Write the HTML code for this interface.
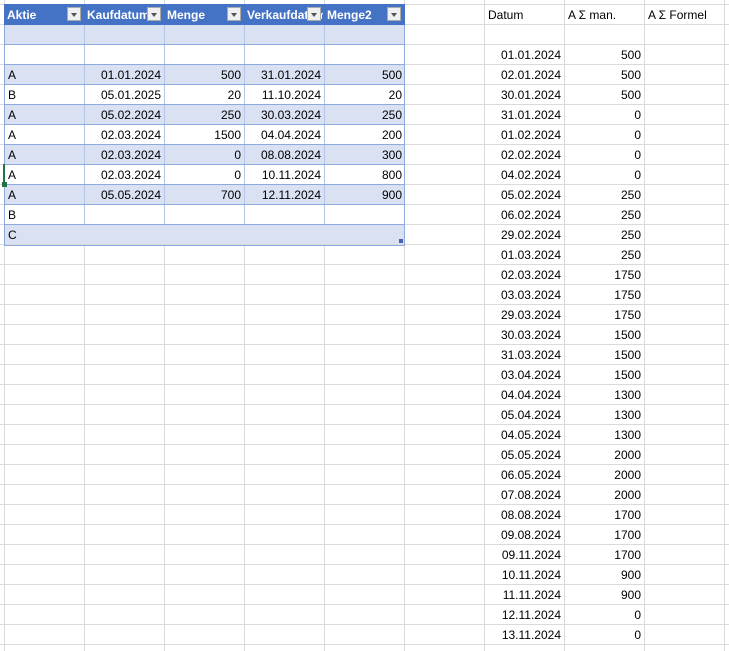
<!DOCTYPE html>
<html><head><meta charset="utf-8"><style>
body{margin:0;width:729px;height:651px;overflow:hidden;background:#fff;font-family:"Liberation Sans",sans-serif;font-size:12px;color:#000;position:relative}
.grid{position:absolute;left:0;top:0;width:729px;height:651px;
background-image:linear-gradient(to right,#dadada 1px,transparent 1px),linear-gradient(to bottom,#dadada 1px,transparent 1px);
background-size:80px 20px;background-position:4px 4px}
.r{position:absolute;left:5px;width:400px;height:20px;display:flex;background:#fff}
.c{flex:0 0 80px;width:80px;height:19px;line-height:20px;padding:0 3px;box-sizing:border-box;border-right:1px solid transparent;white-space:nowrap;overflow:hidden}
.t .c{border-right:1px solid #b4c6e7}
.t{border-bottom:1px solid #8ea9db;height:19px}
.b{background:#d9e1f2}
.rt{text-align:right}
.h{background:#4472c4;color:#fff;font-weight:bold;position:absolute;left:4px;top:4px;width:401px;height:21px;display:flex}
.h .c{position:relative;height:21px;line-height:22px;padding-left:3px}
.dd{position:absolute;right:2px;top:3px;width:14px;height:14px;background:#f0f0f0;border:1px solid #aaa;box-sizing:border-box}
.dd:after{content:"";position:absolute;left:3px;top:5px;border-left:3.5px solid transparent;border-right:3.5px solid transparent;border-top:4px solid #555}
.tbl{position:absolute;left:4px;top:4px;width:399px;height:240px;border:1px solid #8ea9db;box-sizing:content-box}
.rr{position:absolute;left:485px;height:20px;display:flex}
</style></head><body>
<div class="grid"></div>
<div class="r t b" style="top:25px"><div class="c"></div><div class="c"></div><div class="c"></div><div class="c"></div><div class="c" style="border-right:0"></div></div>
<div class="r t" style="top:45px"><div class="c"></div><div class="c"></div><div class="c"></div><div class="c"></div><div class="c" style="border-right:0"></div></div>
<div class="r t b" style="top:65px"><div class="c">A</div><div class="c rt">01.01.2024</div><div class="c rt">500</div><div class="c rt">31.01.2024</div><div class="c rt" style="border-right:0">500</div></div>
<div class="r t" style="top:85px"><div class="c">B</div><div class="c rt">05.01.2025</div><div class="c rt">20</div><div class="c rt">11.10.2024</div><div class="c rt" style="border-right:0">20</div></div>
<div class="r t b" style="top:105px"><div class="c">A</div><div class="c rt">05.02.2024</div><div class="c rt">250</div><div class="c rt">30.03.2024</div><div class="c rt" style="border-right:0">250</div></div>
<div class="r t" style="top:125px"><div class="c">A</div><div class="c rt">02.03.2024</div><div class="c rt">1500</div><div class="c rt">04.04.2024</div><div class="c rt" style="border-right:0">200</div></div>
<div class="r t b" style="top:145px"><div class="c">A</div><div class="c rt">02.03.2024</div><div class="c rt">0</div><div class="c rt">08.08.2024</div><div class="c rt" style="border-right:0">300</div></div>
<div class="r t" style="top:165px"><div class="c">A</div><div class="c rt">02.03.2024</div><div class="c rt">0</div><div class="c rt">10.11.2024</div><div class="c rt" style="border-right:0">800</div></div>
<div class="r t b" style="top:185px"><div class="c">A</div><div class="c rt">05.05.2024</div><div class="c rt">700</div><div class="c rt">12.11.2024</div><div class="c rt" style="border-right:0">900</div></div>
<div class="r t" style="top:205px"><div class="c">B</div><div class="c"></div><div class="c"></div><div class="c"></div><div class="c" style="border-right:0"></div></div>
<div class="r b" style="top:225px;height:19px"><div class="c">C</div></div>
<div class="tbl"></div>
<div class="h"><div class="c">Aktie<span class="dd"></span></div><div class="c">Kaufdatum<span class="dd"></span></div><div class="c">Menge<span class="dd"></span></div><div class="c">Verkaufdatum<span class="dd"></span></div><div class="c">Menge2<span class="dd"></span></div></div>
<div style="position:absolute;left:399px;top:239px;width:4px;height:4px;background:#4a62b0"></div>
<div style="position:absolute;left:3px;top:164px;width:2px;height:20px;background:#217346"></div>
<div style="position:absolute;left:2px;top:182px;width:5px;height:5px;background:#217346"></div>

<div class="rr" style="top:5px"><div class="c">Datum</div><div class="c">A &Sigma; man.</div><div class="c">A &Sigma; Formel</div></div>
<div class="rr" style="top:45px"><div class="c rt">01.01.2024</div><div class="c rt">500</div></div>
<div class="rr" style="top:65px"><div class="c rt">02.01.2024</div><div class="c rt">500</div></div>
<div class="rr" style="top:85px"><div class="c rt">30.01.2024</div><div class="c rt">500</div></div>
<div class="rr" style="top:105px"><div class="c rt">31.01.2024</div><div class="c rt">0</div></div>
<div class="rr" style="top:125px"><div class="c rt">01.02.2024</div><div class="c rt">0</div></div>
<div class="rr" style="top:145px"><div class="c rt">02.02.2024</div><div class="c rt">0</div></div>
<div class="rr" style="top:165px"><div class="c rt">04.02.2024</div><div class="c rt">0</div></div>
<div class="rr" style="top:185px"><div class="c rt">05.02.2024</div><div class="c rt">250</div></div>
<div class="rr" style="top:205px"><div class="c rt">06.02.2024</div><div class="c rt">250</div></div>
<div class="rr" style="top:225px"><div class="c rt">29.02.2024</div><div class="c rt">250</div></div>
<div class="rr" style="top:245px"><div class="c rt">01.03.2024</div><div class="c rt">250</div></div>
<div class="rr" style="top:265px"><div class="c rt">02.03.2024</div><div class="c rt">1750</div></div>
<div class="rr" style="top:285px"><div class="c rt">03.03.2024</div><div class="c rt">1750</div></div>
<div class="rr" style="top:305px"><div class="c rt">29.03.2024</div><div class="c rt">1750</div></div>
<div class="rr" style="top:325px"><div class="c rt">30.03.2024</div><div class="c rt">1500</div></div>
<div class="rr" style="top:345px"><div class="c rt">31.03.2024</div><div class="c rt">1500</div></div>
<div class="rr" style="top:365px"><div class="c rt">03.04.2024</div><div class="c rt">1500</div></div>
<div class="rr" style="top:385px"><div class="c rt">04.04.2024</div><div class="c rt">1300</div></div>
<div class="rr" style="top:405px"><div class="c rt">05.04.2024</div><div class="c rt">1300</div></div>
<div class="rr" style="top:425px"><div class="c rt">04.05.2024</div><div class="c rt">1300</div></div>
<div class="rr" style="top:445px"><div class="c rt">05.05.2024</div><div class="c rt">2000</div></div>
<div class="rr" style="top:465px"><div class="c rt">06.05.2024</div><div class="c rt">2000</div></div>
<div class="rr" style="top:485px"><div class="c rt">07.08.2024</div><div class="c rt">2000</div></div>
<div class="rr" style="top:505px"><div class="c rt">08.08.2024</div><div class="c rt">1700</div></div>
<div class="rr" style="top:525px"><div class="c rt">09.08.2024</div><div class="c rt">1700</div></div>
<div class="rr" style="top:545px"><div class="c rt">09.11.2024</div><div class="c rt">1700</div></div>
<div class="rr" style="top:565px"><div class="c rt">10.11.2024</div><div class="c rt">900</div></div>
<div class="rr" style="top:585px"><div class="c rt">11.11.2024</div><div class="c rt">900</div></div>
<div class="rr" style="top:605px"><div class="c rt">12.11.2024</div><div class="c rt">0</div></div>
<div class="rr" style="top:625px"><div class="c rt">13.11.2024</div><div class="c rt">0</div></div>
</body></html>
